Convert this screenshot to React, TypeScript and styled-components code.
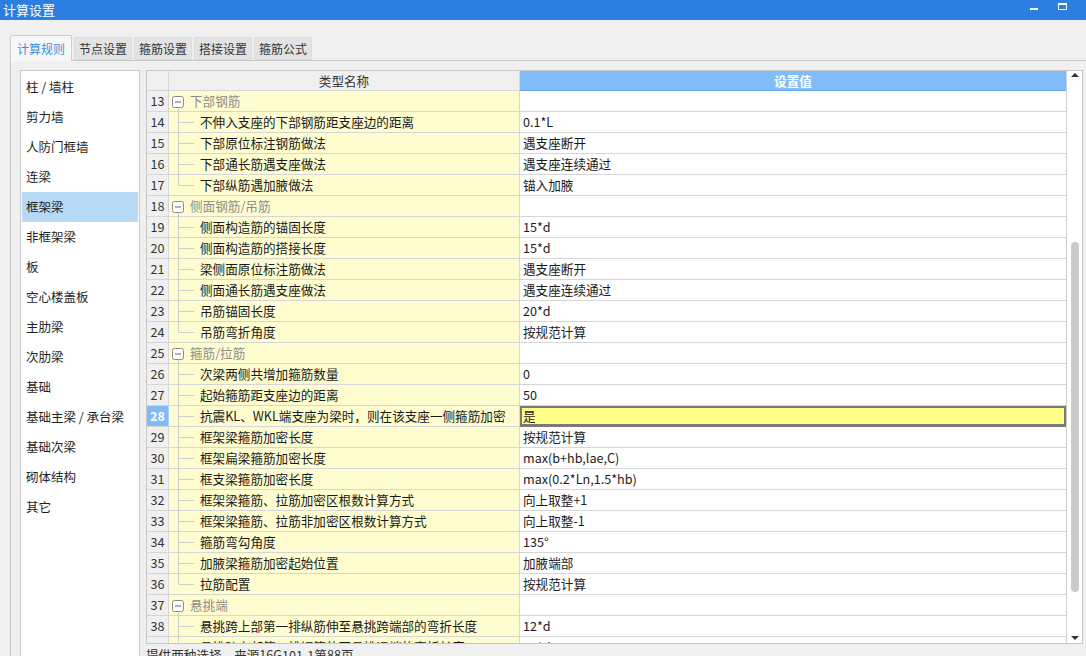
import styled, { createGlobalStyle } from 'styled-components'

const GlobalStyle = createGlobalStyle`
  html, body {
    margin: 0;
    padding: 0;
    background: #f0f0f0;
    overflow: hidden;
  }
  body {
    font-family: "Noto Sans CJK SC", "Noto Sans", "Liberation Sans", sans-serif;
  }
`

const Window = styled.div`
  width: 1086px;
  height: 656px;
  display: flex;
  flex-direction: column;
  background: #f0f0f0;
  overflow: hidden;
`

const TitleBar = styled.div`
  height: 20px;
  flex: none;
  background: #2b7fe1;
  color: #fff;
  display: flex;
  align-items: center;
  padding: 0 10px 0 3px;
  font-size: 13px;
`

const Title = styled.span`
  flex: 1;
  line-height: 20px;
`

const WinButton = styled.div`
  width: 28px;
  height: 20px;
  display: flex;
`

const Body = styled.div`
  flex: 1;
  min-height: 0;
  display: flex;
  flex-direction: column;
  padding: 15px 0 0 10px;
`

const TabBar = styled.div`
  height: 25px;
  flex: none;
  display: flex;
  align-items: flex-end;
  gap: 2px;
  position: relative;
  z-index: 1;
`

const Tab = styled.div<{ $active?: boolean }>`
  box-sizing: border-box;
  height: ${p => (p.$active ? '26px' : '23px')};
  margin-bottom: ${p => (p.$active ? '-1px' : '0')};
  padding: ${p => (p.$active ? '0 6px 1px' : '0 4px')};
  display: flex;
  align-items: center;
  font-size: 12px;
  color: ${p => (p.$active ? '#3a8ee2' : '#333')};
  background: ${p => (p.$active ? '#f7f7f7' : '#e3e3e3')};
  border: 1px solid ${p => (p.$active ? '#cdcdcd' : '#dcdcdc')};
  border-bottom: ${p => (p.$active ? 'none' : '1px solid #dcdcdc')};
  border-radius: 2px 2px 0 0;
`

const Panel = styled.div`
  flex: 1;
  min-height: 0;
  display: flex;
  align-items: flex-start;
  gap: 6px;
  border-top: 1px solid #c8c8c8;
  border-left: 1px solid #c8c8c8;
  padding: 9px 0 0 9px;
`

const Sidebar = styled.div`
  box-sizing: border-box;
  width: 120px;
  height: 620px;
  flex: none;
  background: #fff;
  border: 1px solid #c9c9c9;
  padding: 1px;
`

const SideItem = styled.div<{ $active?: boolean }>`
  height: 30px;
  display: flex;
  align-items: center;
  padding: 0 0 1px 4px;
  box-sizing: border-box;
  font-size: 12.5px;
  color: #1e1e1e;
  background: ${p => (p.$active ? '#b6daf5' : 'transparent')};
`

const Main = styled.div`
  display: flex;
  flex-direction: column;
`

const Table = styled.div`
  box-sizing: border-box;
  width: 937px;
  height: 574px;
  display: flex;
  background: #fff;
  border: 1px solid #c8c8c8;
`

const Grid = styled.div`
  flex: 1;
  overflow: hidden;
  display: grid;
  grid-template-columns: 22px 351px 1fr;
  grid-template-rows: 20px;
  grid-auto-rows: 21px;
  align-content: start;
  font-size: 12.6px;
`

const Cell = styled.div`
  box-sizing: border-box;
  display: flex;
  align-items: center;
  padding-bottom: 1px;
  white-space: nowrap;
  overflow: hidden;
  border-right: 1px solid #d6d6d6;
  border-bottom: 1px solid #d6d6d6;
`

const HeadCell = styled(Cell)<{ $accent?: boolean }>`
  justify-content: center;
  background: ${p => (p.$accent ? '#80bcf8' : '#f0f0f0')};
  color: ${p => (p.$accent ? '#fff' : '#333')};
  font-weight: ${p => (p.$accent ? 600 : 400)};
  border-bottom-color: ${p => (p.$accent ? '#64a6ee' : '#d6d6d6')};
  border-right: ${p => (p.$accent ? 'none' : '1px solid #d6d6d6')};
`

const NumCell = styled(Cell)<{ $selected?: boolean }>`
  justify-content: center;
  background: ${p => (p.$selected ? '#80bbf6' : '#f0f0f0')};
  color: ${p => (p.$selected ? '#fff' : '#333')};
  font-weight: ${p => (p.$selected ? 700 : 400)};
  border-right-color: ${p => (p.$selected ? '#a8d0f8' : '#d6d6d6')};
`

const NameCell = styled(Cell)<{ $group?: boolean }>`
  padding-bottom: 0;
  background: #fffdd0;
  color: ${p => (p.$group ? '#8d8d8d' : '#1a1a1a')};
  svg {
    flex: none;
    overflow: visible;
  }
  span {
    padding-bottom: 1px;
  }
`

const ValueCell = styled(Cell)<{ $selected?: boolean }>`
  border-right: none;
  padding-left: 3px;
  color: #1a1a1a;
  background: ${p => (p.$selected ? '#ffff88' : '#fff')};
  box-shadow: ${p => (p.$selected ? 'inset 0 0 0 2px #7a7a7a' : 'none')};
  border-bottom-color: ${p => (p.$selected ? '#7a7a7a' : '#d6d6d6')};
`

const Scrollbar = styled.div`
  box-sizing: border-box;
  width: 16px;
  flex: none;
  display: flex;
  flex-direction: column;
  align-items: center;
  border-left: 1px solid #d0d0d0;
`

const Arrow = styled.div<{ $down?: boolean }>`
  width: 0;
  height: 0;
  border-left: 4px solid transparent;
  border-right: 4px solid transparent;
  border-bottom: ${p => (p.$down ? 'none' : '4px solid #333')};
  border-top: ${p => (p.$down ? '4px solid #333' : 'none')};
  margin: ${p => (p.$down ? 'auto 0 3px' : '2px 0 0')};
`

const Thumb = styled.div<{ $top: number; $size: number }>`
  width: 8px;
  height: ${p => p.$size}px;
  margin-top: ${p => p.$top}px;
  border-radius: 4px;
  background: #cbcbcb;
`

const Note = styled.div`
  margin-top: 3px;
  font-size: 12.6px;
  line-height: 16px;
  color: #333;
`

type Kind = 'group' | 'child' | 'last'
type Row = { n: number; name: string; value?: string; kind: Kind; selected?: boolean }

const rows: Row[] = [
  { n: 13, name: '下部钢筋', kind: 'group' },
  { n: 14, name: '不伸入支座的下部钢筋距支座边的距离', value: '0.1*L', kind: 'child' },
  { n: 15, name: '下部原位标注钢筋做法', value: '遇支座断开', kind: 'child' },
  { n: 16, name: '下部通长筋遇支座做法', value: '遇支座连续通过', kind: 'child' },
  { n: 17, name: '下部纵筋遇加腋做法', value: '锚入加腋', kind: 'last' },
  { n: 18, name: '侧面钢筋/吊筋', kind: 'group' },
  { n: 19, name: '侧面构造筋的锚固长度', value: '15*d', kind: 'child' },
  { n: 20, name: '侧面构造筋的搭接长度', value: '15*d', kind: 'child' },
  { n: 21, name: '梁侧面原位标注筋做法', value: '遇支座断开', kind: 'child' },
  { n: 22, name: '侧面通长筋遇支座做法', value: '遇支座连续通过', kind: 'child' },
  { n: 23, name: '吊筋锚固长度', value: '20*d', kind: 'child' },
  { n: 24, name: '吊筋弯折角度', value: '按规范计算', kind: 'last' },
  { n: 25, name: '箍筋/拉筋', kind: 'group' },
  { n: 26, name: '次梁两侧共增加箍筋数量', value: '0', kind: 'child' },
  { n: 27, name: '起始箍筋距支座边的距离', value: '50', kind: 'child' },
  { n: 28, name: '抗震KL、WKL端支座为梁时，则在该支座一侧箍筋加密', value: '是', kind: 'child', selected: true },
  { n: 29, name: '框架梁箍筋加密长度', value: '按规范计算', kind: 'child' },
  { n: 30, name: '框架扁梁箍筋加密长度', value: 'max(b+hb,lae,C)', kind: 'child' },
  { n: 31, name: '框支梁箍筋加密长度', value: 'max(0.2*Ln,1.5*hb)', kind: 'child' },
  { n: 32, name: '框架梁箍筋、拉筋加密区根数计算方式', value: '向上取整+1', kind: 'child' },
  { n: 33, name: '框架梁箍筋、拉筋非加密区根数计算方式', value: '向上取整-1', kind: 'child' },
  { n: 34, name: '箍筋弯勾角度', value: '135°', kind: 'child' },
  { n: 35, name: '加腋梁箍筋加密起始位置', value: '加腋端部', kind: 'child' },
  { n: 36, name: '拉筋配置', value: '按规范计算', kind: 'last' },
  { n: 37, name: '悬挑端', kind: 'group' },
  { n: 38, name: '悬挑跨上部第一排纵筋伸至悬挑跨端部的弯折长度', value: '12*d', kind: 'child' },
  { n: 39, name: '悬挑跨上部第二排钢筋伸至悬挑远端的弯折长度', value: '10*d', kind: 'child' },
]

const sideItems = [
  '柱 / 墙柱', '剪力墙', '人防门框墙', '连梁', '框架梁', '非框架梁', '板', '空心楼盖板',
  '主肋梁', '次肋梁', '基础', '基础主梁 / 承台梁', '基础次梁', '砌体结构', '其它',
]

const tabs = ['计算规则', '节点设置', '箍筋设置', '搭接设置', '箍筋公式']

const LINE = '#cfcfcf'

function TreeMark({ kind }: { kind: Kind }) {
  if (kind === 'group') {
    return (
      <svg width="21" height="20">
        <rect x="3.5" y="5.5" width="11" height="11" rx="2" fill="#fff" stroke="#8a8a8a" />
        <line x1="6" y1="11" x2="12" y2="11" stroke="#666" strokeWidth="1" />
        <line x1="9.5" y1="16.5" x2="9.5" y2="21" stroke={LINE} />
      </svg>
    )
  }
  return (
    <svg width="31" height="20">
      <line x1="9.5" y1="-1" x2="9.5" y2={kind === 'last' ? 10.5 : 21} stroke={LINE} />
      <line x1="9.5" y1="10.5" x2="25" y2="10.5" stroke={LINE} />
    </svg>
  )
}

function App() {
  return (
    <Window>
      <GlobalStyle />
      <TitleBar>
        <Title>计算设置</Title>
        <WinButton>
          <svg width="28" height="20">
            <rect x="10" y="8" width="8" height="2" fill="#fff" />
          </svg>
        </WinButton>
        <WinButton>
          <svg width="28" height="20">
            <rect x="10.5" y="3.5" width="8" height="6" fill="none" stroke="#fff" />
            <rect x="10" y="3" width="9" height="2" fill="#fff" />
          </svg>
        </WinButton>
      </TitleBar>

      <Body>
        <TabBar>
          {tabs.map((t, i) => (
            <Tab key={t} $active={i === 0}>{t}</Tab>
          ))}
        </TabBar>

        <Panel>
          <Sidebar>
            {sideItems.map(item => (
              <SideItem key={item} $active={item === '框架梁'}>{item}</SideItem>
            ))}
          </Sidebar>

          <Main>
            <Table>
              <Grid>
                <HeadCell />
                <HeadCell>类型名称</HeadCell>
                <HeadCell $accent>设置值</HeadCell>
                {rows.map(r => (
                  <>
                    <NumCell key={`n${r.n}`} $selected={r.selected}>{r.n}</NumCell>
                    <NameCell key={`a${r.n}`} $group={r.kind === 'group'}>
                      <TreeMark kind={r.kind} />
                      <span>{r.name}</span>
                    </NameCell>
                    <ValueCell key={`v${r.n}`} $selected={r.selected}>{r.value}</ValueCell>
                  </>
                ))}
              </Grid>
              <Scrollbar>
                <Arrow />
                <Thumb $top={165} $size={350} />
                <Arrow $down />
              </Scrollbar>
            </Table>
            <Note>提供两种选择，来源16G101-1第88页</Note>
          </Main>
        </Panel>
      </Body>
    </Window>
  )
}

export default App
